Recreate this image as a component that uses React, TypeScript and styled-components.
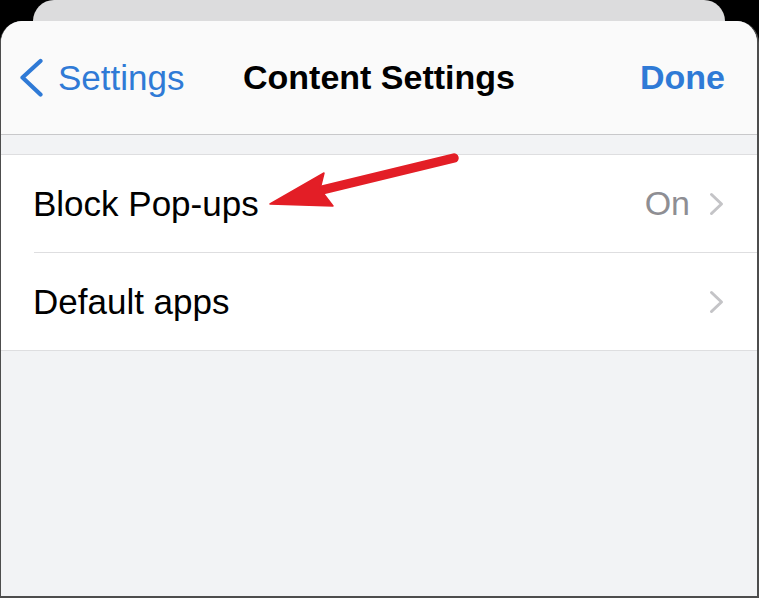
import styled, { createGlobalStyle } from "styled-components";

const GlobalStyle = createGlobalStyle`
  html, body {
    margin: 0;
    padding: 0;
    background: #000;
  }
  body {
    font-family: "Liberation Sans", Arial, sans-serif;
    -webkit-font-smoothing: antialiased;
  }
`;

const Screen = styled.div`
  position: relative;
  width: 759px;
  height: 598px;
  display: flex;
  flex-direction: column;
  background: #000;
  overflow: hidden;
`;

const BackCard = styled.div`
  height: 21px;
  margin: 0 34px 0 33px;
  flex-shrink: 0;
  background: #dcdcdd;
  border-radius: 21px 21px 0 0;
`;

const Sheet = styled.div`
  flex: 1;
  display: flex;
  flex-direction: column;
  background: #f2f3f5;
  border-radius: 22px 22px 0 0;
  border-left: 1px solid #4d4d4d;
  border-right: 2px solid #4d4d4d;
  border-bottom: 2px solid #4d4d4d;
  overflow: hidden;
`;

const NavBar = styled.div`
  height: 113px;
  display: grid;
  grid-template-columns: 1fr auto 1fr;
  align-items: center;
  padding: 0 32px;
  background: #fafafa;
  border-bottom: 1px solid #c8c8ca;
`;

const BackButton = styled.div`
  display: flex;
  align-items: center;
  gap: 15px;
  margin-left: -14px;
  color: #2f7ad6;
  font-size: 35px;
`;

const Title = styled.div`
  font-size: 34px;
  font-weight: 700;
  color: #000;
`;

const DoneButton = styled.div`
  justify-self: end;
  font-size: 34px;
  font-weight: 700;
  color: #2f7ad6;
`;

const Gap = styled.div`
  height: 19px;
`;

const List = styled.div`
  background: #fff;
  border-top: 1px solid #dedee0;
  border-bottom: 1px solid #dedee0;
  padding-left: 33px;
`;

const Row = styled.div<{ $last?: boolean }>`
  height: 97px;
  display: flex;
  align-items: center;
  padding-right: 33px;
  border-bottom: ${(p) => (p.$last ? "none" : "1px solid #dedee0")};
`;

const Label = styled.div`
  flex: 1;
  font-size: 35px;
  color: #000;
  margin-left: -1px;
`;

const Value = styled.div`
  font-size: 34px;
  color: #8e8e93;
  margin-right: 19px;
`;

const Overlay = styled.svg`
  position: absolute;
  left: 0;
  top: 0;
  pointer-events: none;
`;

function BackChevron() {
  return (
    <svg width="24" height="40" viewBox="0 0 24 40">
      <path
        d="M21.5 3 L3.5 19.5 L21.5 36.5"
        fill="none"
        stroke="#2f7ad6"
        strokeWidth="4.2"
        strokeLinecap="round"
        strokeLinejoin="round"
      />
    </svg>
  );
}

function Disclosure() {
  return (
    <svg width="15" height="24" viewBox="0 0 15 24">
      <path
        d="M2.5 2.5 L12.5 12 L2.5 21.5"
        fill="none"
        stroke="#c4c4c7"
        strokeWidth="3"
        strokeLinecap="round"
        strokeLinejoin="round"
      />
    </svg>
  );
}

export default function App() {
  return (
    <>
      <GlobalStyle />
      <Screen>
        <BackCard />
        <Sheet>
          <NavBar>
            <BackButton>
              <BackChevron />
              Settings
            </BackButton>
            <Title>Content Settings</Title>
            <DoneButton>Done</DoneButton>
          </NavBar>
          <Gap />
          <List>
            <Row>
              <Label>Block Pop-ups</Label>
              <Value>On</Value>
              <Disclosure />
            </Row>
            <Row $last>
              <Label>Default apps</Label>
              <Disclosure />
            </Row>
          </List>
        </Sheet>
        <Overlay width="759" height="598" viewBox="0 0 759 598">
          <line
            x1="322"
            y1="190"
            x2="454"
            y2="158"
            stroke="#e31e26"
            strokeWidth="9.5"
            strokeLinecap="round"
          />
          <polygon
            points="270,204 324,173 320,189 333,206"
            fill="#e31e26"
            stroke="#e31e26"
            strokeWidth="1.5"
            strokeLinejoin="round"
          />
        </Overlay>
      </Screen>
    </>
  );
}
